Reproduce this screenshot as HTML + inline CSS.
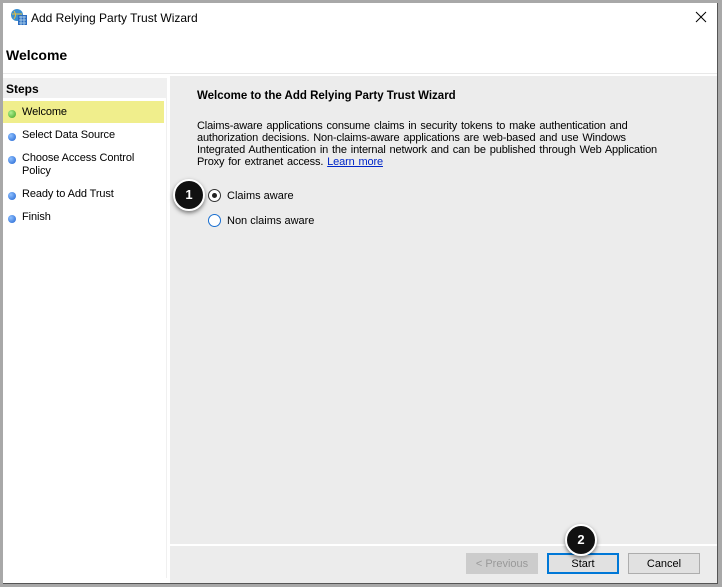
<!DOCTYPE html>
<html><head><style>
body{margin:0;width:722px;height:587px;background:#a8a8a8;font-family:"Liberation Sans",Arial,sans-serif;font-size:11px;color:#000;position:relative;overflow:hidden}
.win{position:absolute;left:3px;top:3px;width:714px;height:580px;background:#fff;border-right:1px solid #555;border-bottom:1px solid #555}
.abs{position:absolute}
.dot{position:absolute;left:5px;width:8px;height:8px;border-radius:50%;background:radial-gradient(circle at 35% 35%,#8fc0ff,#1e62d0)}
.step{position:absolute;left:19px;font-size:11px;line-height:13px;letter-spacing:-0.1px}
.btn{position:absolute;top:550px;width:70px;height:19px;border:1px solid #adadad;background:#e1e1e1;text-align:center;line-height:21px;font-size:11px}
.badge{position:absolute;width:28px;height:28px;border-radius:50%;background:#111;color:#fff;font-weight:bold;font-size:13px;text-align:center;line-height:28px;box-shadow:0 2px 4px rgba(0,0,0,.5);border:2px solid #fff}
.radio{position:absolute;width:11px;height:11px;border-radius:50%;border:1px solid #333;background:#fff}
</style></head><body>
<div class="win">
  <svg class="abs" style="left:7px;top:5px" width="18" height="18" viewBox="0 0 18 18"><circle cx="7" cy="7" r="6" fill="#3a8fd0"/><path d="M2 6h10M4 3q3 4 0 8" stroke="#e8c040" fill="none"/><rect x="8" y="7" width="9" height="10" fill="#2c6cc0"/><path d="M9 9h7M9 12h7M9 15h7M11 8v9M14 8v9" stroke="#bde" stroke-width=".8"/></svg>
  <div class="abs" style="left:28px;top:8px;font-size:12px">Add Relying Party Trust Wizard</div>
  <svg class="abs" style="left:692px;top:8px" width="12" height="12" viewBox="0 0 12 12"><path d="M1 1L11 11M11 1L1 11" stroke="#000" stroke-width="1"/></svg>
  <div class="abs" style="left:3px;top:44px;font-size:14px;font-weight:bold">Welcome</div>
  <div class="abs" style="left:0;top:70px;width:714px;height:1px;background:#e8e8e8"></div>
  <div class="abs" style="left:0;top:75px;width:163px;height:20px;background:#f0f0f0"></div>
  <div class="abs" style="left:3px;top:79px;font-weight:bold;font-size:12px">Steps</div>
  <div class="abs" style="left:0;top:98px;width:161px;height:22px;background:#f0ee8c"></div>
  <div class="dot" style="top:107px;background:radial-gradient(circle at 35% 35%,#b0f090,#3ca020)"></div>
  <div class="step" style="top:103px">Welcome</div>
  <div class="dot" style="top:130px"></div><div class="step" style="top:126px">Select Data Source</div>
  <div class="dot" style="top:153px"></div><div class="step" style="top:149px">Choose Access Control<br>Policy</div>
  <div class="dot" style="top:189px"></div><div class="step" style="top:185px">Ready to Add Trust</div>
  <div class="dot" style="top:212px"></div><div class="step" style="top:208px">Finish</div>
  <div class="abs" style="left:163px;top:75px;width:1px;height:500px;background:#f0f0f0"></div>
  <div class="abs" style="left:167px;top:73px;width:547px;height:507px;background:#ececec"></div>
  <div class="abs" style="left:167px;top:541px;width:547px;height:2px;background:#fff"></div>
  <div class="abs" style="left:194px;top:87px;font-weight:bold;font-size:11.5px">Welcome to the Add Relying Party Trust Wizard</div>
  <div class="abs" style="left:194px;top:117px;width:466px;line-height:12px;font-size:11px;letter-spacing:-0.15px;word-spacing:1px">Claims-aware applications consume claims in security tokens to make authentication and authorization decisions. Non-claims-aware applications are web-based and use Windows Integrated Authentication in the internal network and can be published through Web Application Proxy for extranet access. <span style="color:#0026c8;text-decoration:underline">Learn more</span></div>
  <div class="radio" style="left:205px;top:186px"><div style="position:absolute;left:3px;top:3px;width:5px;height:5px;border-radius:50%;background:#222"></div></div>
  <div class="abs" style="left:224px;top:187px">Claims aware</div>
  <div class="radio" style="left:205px;top:211px;border-color:#1a6fd0"></div>
  <div class="abs" style="left:224px;top:212px">Non claims aware</div>
  <div class="badge" style="left:170px;top:176px">1</div>
  <div class="btn" style="left:463px;color:#999;border-color:#ccc;background:#ccc">&lt; Previous</div>
  <div class="btn" style="left:544px;border:2px solid #0078d7;width:68px;height:17px;line-height:19px">Start</div>
  <div class="btn" style="left:625px">Cancel</div>
  <div class="badge" style="left:562px;top:521px">2</div>
</div>
</body></html>
